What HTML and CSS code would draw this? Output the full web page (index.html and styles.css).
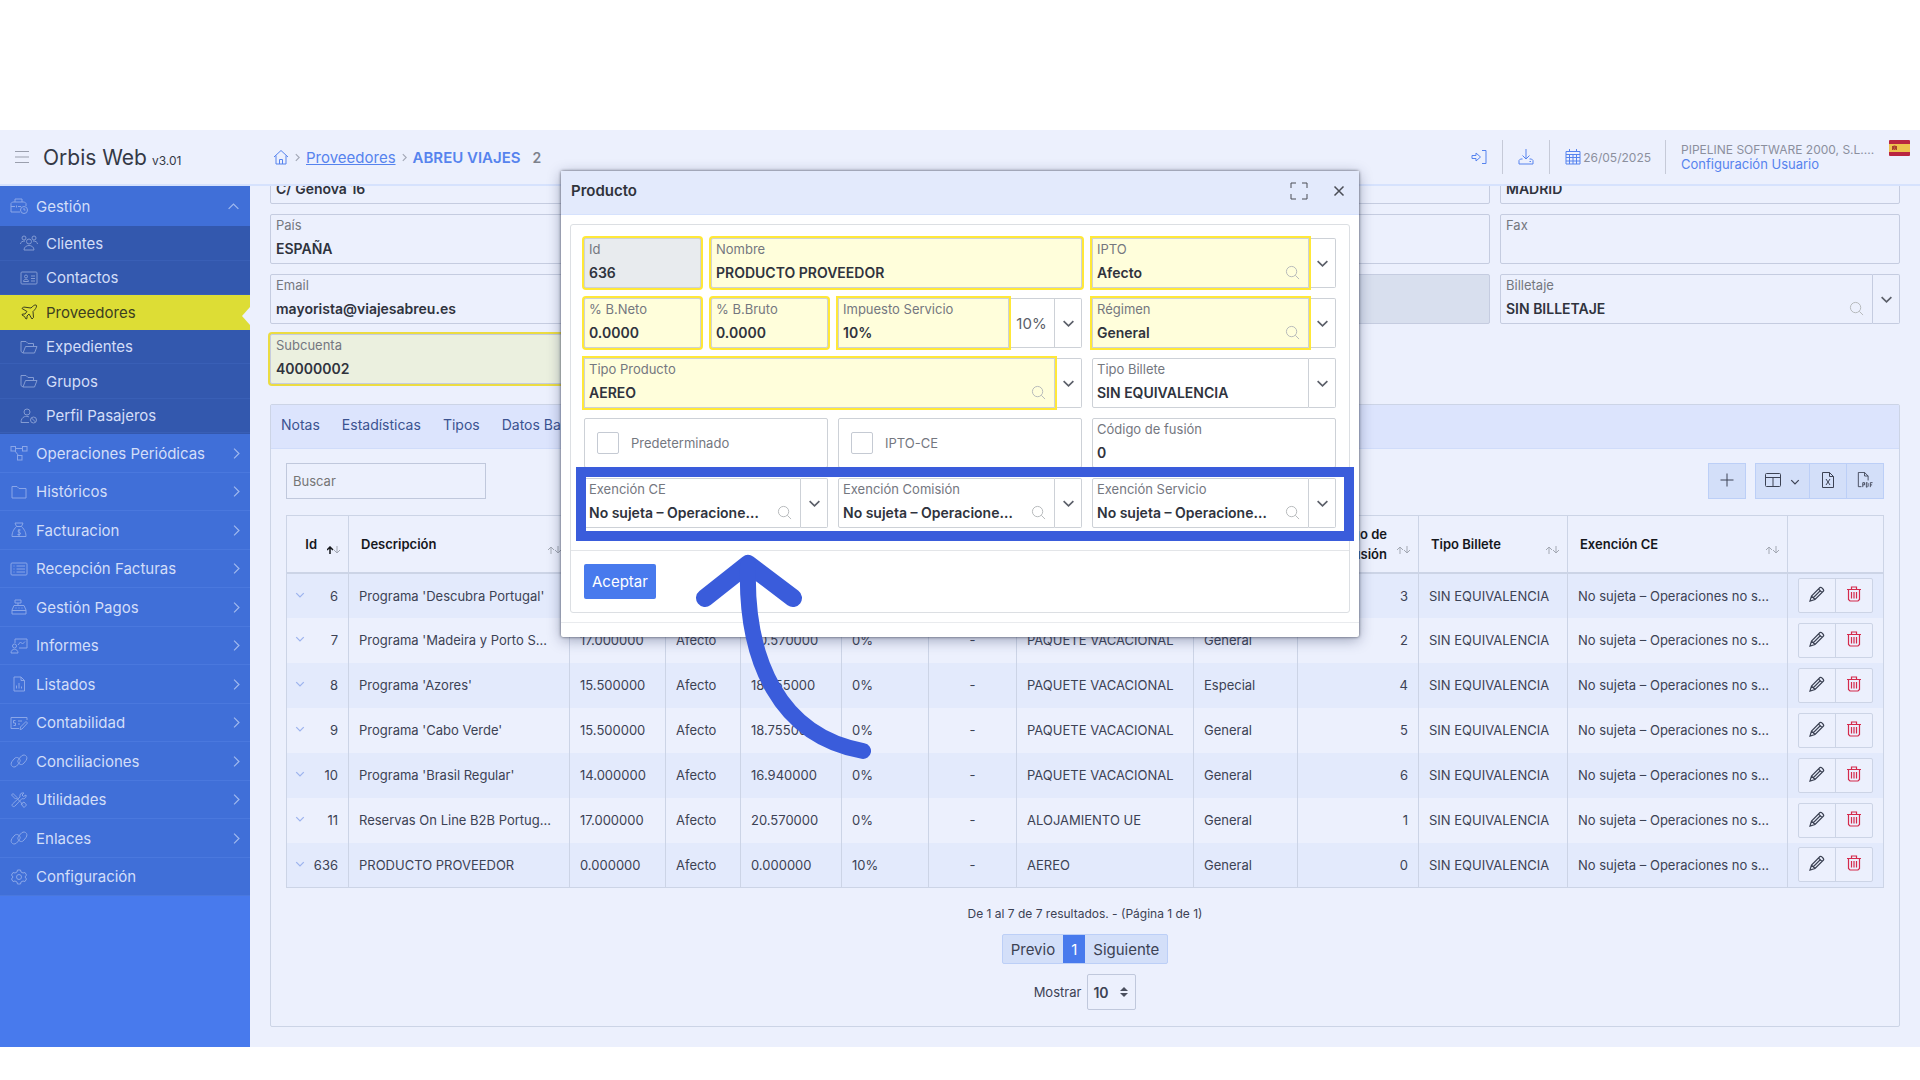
FILE: index.html
```html
<!DOCTYPE html>
<html lang="es">
<head>
    <meta charset="UTF-8">
    <meta name="viewport" content="width=device-width, initial-scale=1.0">
    <title>Orbis Web - Proveedores</title>
    <link rel="stylesheet" href="styles.css">
</head>
<body>
    <!-- Icon set -->
    <svg class="sprite" aria-hidden="true">
        <symbol id="i-menu" viewBox="0 0 16 16"><path d="M1 2.500h14M1 8h14M1 13.500h14"/></symbol>
        <symbol id="i-home" viewBox="0 0 16 16"><path d="M1 8l7-6.500L15 8M3 6.500V15h10V6.500M6.500 15v-4.500h3V15"/></symbol>
        <symbol id="i-right" viewBox="0 0 16 16"><path d="M5 2l6 6-6 6"/></symbol>
        <symbol id="i-down" viewBox="0 0 16 16"><path d="M2 5l6 6 6-6"/></symbol>
        <symbol id="i-up" viewBox="0 0 16 16"><path d="M2 11l6-6 6 6"/></symbol>
        <symbol id="i-login" viewBox="0 0 16 16"><path d="M11 1.500h4v13h-4M1 6.500h4V4l4.500 4L5 12V9.500H1z"/></symbol>
        <symbol id="i-download" viewBox="0 0 16 16"><path d="M8 0v9.500M4.500 6.500L8 10l3.500-3.500M4.500 10H2.500L1 11.500V15h14v-3.500L13.500 10h-2M11.500 12.500h1.500"/></symbol>
        <symbol id="i-calendar" viewBox="0 0 16 16"><path d="M1 2.500h14V15H1zM1 5.500h14M1 8.500h14M1 12h14M4.500 5.500V15M8 5.500V15M11.500 5.500V15M4.500 0v3M11.500 0v3"/></symbol>
        <symbol id="i-search" viewBox="0 0 16 16"><circle cx="7" cy="7" r="5.500"/><path d="M11 11l4 4"/></symbol>
        <symbol id="i-expand" viewBox="0 0 18 18"><path d="M1 6V1h5M12 1h5v5M17 12v5h-5M6 17H1v-5"/></symbol>
        <symbol id="i-close" viewBox="0 0 16 16"><path d="M2 2l12 12M14 2L2 14"/></symbol>
        <symbol id="i-plus" viewBox="0 0 16 16"><path d="M8 1.500v13M1.500 8h13"/></symbol>
        <symbol id="i-layout" viewBox="0 0 16 16"><rect x=".5" y="1.500" width="15" height="13" rx="1"/><path d="M.5 5.500h15M8 5.500v9"/></symbol>
        <symbol id="i-xls" viewBox="0 0 16 16"><path d="M2.500.5h7l4 4v11h-11zM9.500.5v4h4M6 7l4 6M10 7l-4 6"/></symbol>
        <symbol id="i-pdf" viewBox="0 0 18 18"><path d="M5 16.500H1.500V.5h7l4 4v5M8.500.5v4h4M6.500 17v-5h2v2.500h-2M10.500 12v5h1l1-1v-3l-1-1zM15 17v-5h2.500M15 14.500h2"/></symbol>
        <symbol id="i-pencil" viewBox="0 0 16 16"><path d="M1 15l1.500-5L11 1.500c1-1 4.500 2.500 3.500 3.500L6 13.500zM2.500 10L6 13.500M9.500 3L13 6.500M4.500 11.500l6.500-6.500"/></symbol>
        <symbol id="i-trash" viewBox="0 0 16 16"><path d="M1 3.500h14M5.500 3V1h5v2M2.500 3.500v10L4 15h8l1.500-1.500v-10M5.500 6v6.500M8 6v6.500M10.500 6v6.500"/></symbol>
        <symbol id="i-briefcase" viewBox="0 0 18 16"><path d="M10 14H1V5.500L2.500 4h12L16 5.500V8M5 4V1h7v3M1 8.500h4M8 8.500h3M6.500 7.500v2"/><circle cx="14" cy="12" r="3.500"/><path d="M14 10v2h1.500"/></symbol>
        <symbol id="i-users" viewBox="0 0 18 16"><circle cx="9" cy="6.500" r="2.500"/><circle cx="4" cy="3" r="2"/><circle cx="14" cy="3" r="2"/><path d="M4 15c0-6 10-6 10 0zM.5 9c0-2 2-3 4.500-3M17.500 9c0-2-2-3-4.500-3"/></symbol>
        <symbol id="i-card" viewBox="0 0 18 16"><rect x="1" y="2" width="16" height="12" rx="1"/><circle cx="6" cy="6.500" r="1.500"/><path d="M3.500 11.500c0-3 5-3 5 0zM11 6h4M11 8.500h4M11 11h4"/></symbol>
        <symbol id="i-plane" viewBox="0 0 16 16"><path d="M10 4c1.500-1.500 3.500-3.500 5-3s0 3.500-2 5.500l-1 1 .5 6-1.500 1.500-3-5-2 2v2.500L5 15l-1.500-2.500L1 11l.5-1H4l2-2.500-5-3L2.500 3z"/></symbol>
        <symbol id="i-folder-open" viewBox="0 0 18 16"><path d="M3 14L1 12.500v-10h5l2 2h5.500v3M3 14l2.500-6.500H17L14.500 14z"/></symbol>
        <symbol id="i-person" viewBox="0 0 18 16"><circle cx="7" cy="4" r="3"/><path d="M9 14.500H1C1 8 7 7.500 9 9"/><circle cx="13.500" cy="12" r="3"/><path d="M11.500 10l4 4"/></symbol>
        <symbol id="i-flow" viewBox="0 0 18 16"><rect x="1" y="1.500" width="4.500" height="4.500"/><rect x="12.500" y="1.500" width="4.500" height="4.500"/><rect x="7.500" y="10.500" width="4.500" height="4.500"/><path d="M5.500 3.500h7M5 6l3.500 4.500"/></symbol>
        <symbol id="i-folder" viewBox="0 0 18 16"><path d="M2 2.500h5l2 2h7v9.500H2z"/></symbol>
        <symbol id="i-bag" viewBox="0 0 18 16"><path d="M6.500 4.500L5 1h8l-1.500 3.500zM6.500 4.500C3 8 2 11 2 14.500h14c0-3.500-1-6.500-4.500-10M10.500 8H8.500l-.5 1.500 2.500 1.500-.5 1.500H7.500M9 7v7"/></symbol>
        <symbol id="i-list" viewBox="0 0 18 16"><rect x="1" y="2" width="16" height="12" rx="1"/><path d="M3.500 5h1M3.500 8h1M3.500 11h1M6.500 5H15M6.500 8H15M6.500 11H15"/></symbol>
        <symbol id="i-register" viewBox="0 0 18 16"><path d="M2 15v-4l2-4.500h10L16 11v4zM2 11.500h14M5 1h6v3H5zM8 4v2.500M5.500 9h1M8.500 9h1M11.500 9h1"/></symbol>
        <symbol id="i-teach" viewBox="0 0 18 16"><path d="M5 5V1h12v9H9"/><circle cx="4.500" cy="8" r="2"/><path d="M1 15c0-5 7-5 7 0zM8 7l2.500-3 2 2L15 3.500"/></symbol>
        <symbol id="i-report" viewBox="0 0 18 16"><path d="M4 1h7l3.500 3.500V15H4zM11 1v3.500h3.500M6.500 12.500v-3M9 12.500V7M11.500 12.500v-2"/></symbol>
        <symbol id="i-check" viewBox="0 0 18 16"><path d="M9 13.500H1v-11h16V5M5.500 5.500h-2V8h2v2.500h-2M8 6h4M8 9h2M10 14.500l.5-2.500L16 6.500 17.500 8 12 14z"/></symbol>
        <symbol id="i-link" viewBox="0 0 18 16"><path d="M9 5.500C7.500 4 5.500 4 4 6L2 8.500C.5 10.500 1 12.500 2.500 13.500s3.500.5 5-1.500L9.500 9.500c1-1.500 1-3-.5-4"/><path d="M9 10.500c1.500 1.500 3.500 1.500 5-.5l2-2.500c1.500-2 1-4-.5-5s-3.500-.5-5 1.500L8.500 6.500c-1 1.500-1 3 .5 4"/></symbol>
        <symbol id="i-tools" viewBox="0 0 18 16"><path d="M3 1.500l4 4-1.500 1.500-4-4zM6.500 6l6.500 6.500M11 12l3-2 2.500 3L14 15.500zM16 3c.5 3-2 4.500-4 3.500L5 14c-1.500 1.500-4 0-2.500-2L10 5C9.500 2 11 .5 14 1l-2 2 1.500 1.500z"/></symbol>
        <symbol id="i-gear" viewBox="0 0 18 16"><path d="M7.500 1h3l.5 2 2 1 2-.5 1.500 2.500L15 8l1.500 2-1.500 2.500-2-.5-2 1-.5 2h-3L7 13l-2-1-2 .5L1.500 10 3 8 1.500 6 3 3.500 5 4l2-1z"/><circle cx="9" cy="8" r="2.500"/></symbol>
    </svg>

    <div class="app">
        <header class="topbar">
            <div class="brand">
                <button class="icon-btn burger" type="button" aria-label="Menú"><svg class="icon"><use href="#i-menu"/></svg></button>
                <span class="brand-name">Orbis Web</span>
                <span class="brand-version">v3.01</span>
            </div>
            <nav class="breadcrumb">
                <a href="#" aria-label="Inicio"><svg class="icon"><use href="#i-home"/></svg></a>
                <svg class="icon sep"><use href="#i-right"/></svg>
                <a href="#" class="crumb">Proveedores</a>
                <svg class="icon sep"><use href="#i-right"/></svg>
                <strong>ABREU VIAJES</strong>
                <span class="count">2</span>
            </nav>
            <div class="top-actions">
                <button class="icon-btn" type="button" aria-label="Entrar"><svg class="icon"><use href="#i-login"/></svg></button>
                <button class="icon-btn" type="button" aria-label="Descargar"><svg class="icon"><use href="#i-download"/></svg></button>
                <span class="date"><svg class="icon"><use href="#i-calendar"/></svg>26/05/2025</span>
                <div class="user">
                    <span class="user-name">PIPELINE SOFTWARE 2000, S.L....</span>
                    <a href="#">Configuración Usuario</a>
                </div>
                <svg class="flag" viewBox="0 0 21 16">
                    <rect width="21" height="16" rx="1" fill="#b92540"/>
                    <rect y="4" width="21" height="8" fill="#edc14d"/>
                    <path d="M3.500 6v4M7.500 6v4M4.500 6h2v3l-1 1-1-1z" stroke="#a8402c" fill="#c2553b"/>
                </svg>
            </div>
        </header>

        <div class="body">
            <aside class="sidebar">
                <ul class="menu">
                    <li class="open">
                        <a href="#"><svg class="icon"><use href="#i-briefcase"/></svg>Gestión<svg class="arrow"><use href="#i-up"/></svg></a>
                        <ul class="submenu">
                            <li><a href="#"><svg class="icon"><use href="#i-users"/></svg>Clientes</a></li>
                            <li><a href="#"><svg class="icon"><use href="#i-card"/></svg>Contactos</a></li>
                            <li class="active"><a href="#"><svg class="icon"><use href="#i-plane"/></svg>Proveedores</a></li>
                            <li><a href="#"><svg class="icon"><use href="#i-folder-open"/></svg>Expedientes</a></li>
                            <li><a href="#"><svg class="icon"><use href="#i-folder-open"/></svg>Grupos</a></li>
                            <li><a href="#"><svg class="icon"><use href="#i-person"/></svg>Perfil Pasajeros</a></li>
                        </ul>
                    </li>
                    <li><a href="#"><svg class="icon"><use href="#i-flow"/></svg>Operaciones Periódicas<svg class="arrow"><use href="#i-right"/></svg></a></li>
                    <li><a href="#"><svg class="icon"><use href="#i-folder"/></svg>Históricos<svg class="arrow"><use href="#i-right"/></svg></a></li>
                    <li><a href="#"><svg class="icon"><use href="#i-bag"/></svg>Facturacion<svg class="arrow"><use href="#i-right"/></svg></a></li>
                    <li><a href="#"><svg class="icon"><use href="#i-list"/></svg>Recepción Facturas<svg class="arrow"><use href="#i-right"/></svg></a></li>
                    <li><a href="#"><svg class="icon"><use href="#i-register"/></svg>Gestión Pagos<svg class="arrow"><use href="#i-right"/></svg></a></li>
                    <li><a href="#"><svg class="icon"><use href="#i-teach"/></svg>Informes<svg class="arrow"><use href="#i-right"/></svg></a></li>
                    <li><a href="#"><svg class="icon"><use href="#i-report"/></svg>Listados<svg class="arrow"><use href="#i-right"/></svg></a></li>
                    <li><a href="#"><svg class="icon"><use href="#i-check"/></svg>Contabilidad<svg class="arrow"><use href="#i-right"/></svg></a></li>
                    <li><a href="#"><svg class="icon"><use href="#i-link"/></svg>Conciliaciones<svg class="arrow"><use href="#i-right"/></svg></a></li>
                    <li><a href="#"><svg class="icon"><use href="#i-tools"/></svg>Utilidades<svg class="arrow"><use href="#i-right"/></svg></a></li>
                    <li><a href="#"><svg class="icon"><use href="#i-link"/></svg>Enlaces<svg class="arrow"><use href="#i-right"/></svg></a></li>
                    <li><a href="#"><svg class="icon"><use href="#i-gear"/></svg>Configuración</a></li>
                </ul>
            </aside>

            <main class="content">
                <div class="supplier">
                    <div class="field nolabel"><input type="text" aria-label="Dirección" value="C/ Génova 16"></div>
                    <div class="field"></div>
                    <div class="field"></div>
                    <div class="field nolabel"><input type="text" aria-label="Población" value="MADRID"></div>
                    <div class="field"><label for="pais">País</label><input type="text" id="pais" value="ESPAÑA"></div>
                    <div class="field"></div>
                    <div class="field"></div>
                    <div class="field"><label for="fax">Fax</label><input type="text" id="fax"></div>
                    <div class="field"><label for="email">Email</label><input type="text" id="email" value="mayorista@viajesabreu.es"></div>
                    <div class="field"></div>
                    <div class="field disabled"></div>
                    <div class="combo">
                        <div class="field"><label for="billetaje">Billetaje</label><input type="text" id="billetaje" value="SIN BILLETAJE"><svg class="icon lens"><use href="#i-search"/></svg></div>
                        <button class="drop" type="button" aria-label="Desplegar"><svg class="icon"><use href="#i-down"/></svg></button>
                    </div>
                    <div class="field required"><label for="subcuenta">Subcuenta</label><input type="text" id="subcuenta" value="40000002"></div>
                </div>

                <section class="panel">
                    <nav class="tabs">
                        <a href="#">Notas</a>
                        <a href="#">Estadísticas</a>
                        <a href="#">Tipos</a>
                        <a href="#">Datos Bancarios</a>
                    </nav>
                    <div class="panel-body">
                        <div class="toolbar">
                            <input type="text" class="search" placeholder="Buscar" aria-label="Buscar">
                            <div class="btn-group">
                                <button type="button" aria-label="Nuevo"><svg class="icon"><use href="#i-plus"/></svg></button>
                            </div>
                            <div class="btn-group">
                                <button type="button" class="wide" aria-label="Columnas"><svg class="icon"><use href="#i-layout"/></svg><svg class="icon small"><use href="#i-down"/></svg></button>
                                <button type="button" aria-label="Excel"><svg class="icon"><use href="#i-xls"/></svg></button>
                                <button type="button" aria-label="PDF"><svg class="icon"><use href="#i-pdf"/></svg></button>
                            </div>
                        </div>
                        <table class="grid">
                            <colgroup>
                                <col style="width: 62px"><col><col style="width: 96px"><col style="width: 75px"><col style="width: 101px">
                                <col style="width: 87px"><col style="width: 88px"><col style="width: 177px"><col style="width: 104px">
                                <col style="width: 121px"><col style="width: 149px"><col style="width: 220px"><col style="width: 96px">
                            </colgroup>
                            <thead>
                                <tr id="heading"></tr>
                            </thead>
                            <tbody id="rows"></tbody>
                        </table>
                        <div class="pager">
                            <p>De 1 al 7 de 7 resultados. - (Página 1 de 1)</p>
                            <div class="pages">
                                <button type="button">Previo</button>
                                <button type="button" class="current">1</button>
                                <button type="button">Siguiente</button>
                            </div>
                            <div class="page-size">
                                <label for="mostrar">Mostrar</label>
                                <div class="size-box">
                                    <select id="mostrar"><option>10</option></select>
                                    <svg viewBox="0 0 8 10"><path d="M0 4l4-4 4 4zM0 6l4 4 4-4z"/></svg>
                                </div>
                            </div>
                        </div>
                    </div>
                </section>
            </main>
        </div>

        <div class="dialog" role="dialog" aria-labelledby="dialog-title">
            <div class="dialog-head">
                <h2 id="dialog-title">Producto</h2>
                <button class="icon-btn" type="button" aria-label="Maximizar"><svg class="icon expand"><use href="#i-expand"/></svg></button>
                <button class="icon-btn" type="button" aria-label="Cerrar"><svg class="icon close"><use href="#i-close"/></svg></button>
            </div>
            <form class="dialog-form">
                <div class="fields">
                    <div class="field required readonly"><label for="id">Id</label><input type="text" id="id" value="636" readonly></div>
                    <div class="field required span3"><label for="nombre">Nombre</label><input type="text" id="nombre" value="PRODUCTO PROVEEDOR"></div>
                    <div class="combo span2">
                        <div class="field required"><label for="ipto">IPTO</label><input type="text" id="ipto" value="Afecto"><svg class="icon lens"><use href="#i-search"/></svg></div>
                        <button class="drop" type="button" aria-label="Desplegar"><svg class="icon"><use href="#i-down"/></svg></button>
                    </div>

                    <div class="field required"><label for="neto">% B.Neto</label><input type="text" id="neto" value="0.0000"></div>
                    <div class="field required"><label for="bruto">% B.Bruto</label><input type="text" id="bruto" value="0.0000"></div>
                    <div class="combo span2">
                        <div class="field required"><label for="impuesto">Impuesto Servicio</label><input type="text" id="impuesto" value="10%"></div>
                        <span class="addon">10%</span>
                        <button class="drop" type="button" aria-label="Desplegar"><svg class="icon"><use href="#i-down"/></svg></button>
                    </div>
                    <div class="combo span2">
                        <div class="field required"><label for="regimen">Régimen</label><input type="text" id="regimen" value="General"><svg class="icon lens"><use href="#i-search"/></svg></div>
                        <button class="drop" type="button" aria-label="Desplegar"><svg class="icon"><use href="#i-down"/></svg></button>
                    </div>

                    <div class="combo span4">
                        <div class="field required"><label for="tipo">Tipo Producto</label><input type="text" id="tipo" value="AEREO"><svg class="icon lens"><use href="#i-search"/></svg></div>
                        <button class="drop" type="button" aria-label="Desplegar"><svg class="icon"><use href="#i-down"/></svg></button>
                    </div>
                    <div class="combo span2">
                        <div class="field"><label for="billete">Tipo Billete</label><select id="billete"><option>SIN EQUIVALENCIA</option></select></div>
                        <span class="drop"><svg class="icon"><use href="#i-down"/></svg></span>
                    </div>

                    <div class="field check span2"><input type="checkbox" id="predeterminado"><label for="predeterminado">Predeterminado</label></div>
                    <div class="field check span2"><input type="checkbox" id="iptoce"><label for="iptoce">IPTO-CE</label></div>
                    <div class="field span2"><label for="fusion">Código de fusión</label><input type="text" id="fusion" value="0"></div>

                    <div class="exentos">
                        <div class="combo">
                            <div class="field"><label for="exce">Exención CE</label><input type="text" id="exce" value="No sujeta – Operaciones no sujetas"><svg class="icon lens"><use href="#i-search"/></svg></div>
                            <button class="drop" type="button" aria-label="Desplegar"><svg class="icon"><use href="#i-down"/></svg></button>
                        </div>
                        <div class="combo">
                            <div class="field"><label for="excom">Exención Comisión</label><input type="text" id="excom" value="No sujeta – Operaciones no sujetas"><svg class="icon lens"><use href="#i-search"/></svg></div>
                            <button class="drop" type="button" aria-label="Desplegar"><svg class="icon"><use href="#i-down"/></svg></button>
                        </div>
                        <div class="combo">
                            <div class="field"><label for="exserv">Exención Servicio</label><input type="text" id="exserv" value="No sujeta – Operaciones no sujetas"><svg class="icon lens"><use href="#i-search"/></svg></div>
                            <button class="drop" type="button" aria-label="Desplegar"><svg class="icon"><use href="#i-down"/></svg></button>
                        </div>
                        <!-- callout frame and arrow -->
                        <div class="callout"></div>
                        <svg class="callout-arrow" viewBox="0 0 180 210">
                            <path d="M13 47L56 13l45 34" stroke-width="18"/>
                            <path d="M56 15C53 110 88 185 171 200" stroke-width="16"/>
                        </svg>
                    </div>
                </div>
                <div class="form-foot">
                    <button class="accept" type="button">Aceptar</button>
                </div>
            </form>
        </div>
    </div>

    <script src="script.js"></script>
</body>
</html>
```
FILE: styles.css
```css
* {
    box-sizing: border-box;
    margin: 0;
    padding: 0;
}
body {
    background: #fff;
    color: #3c4254;
    font-family: Inter, "Open Sans", sans-serif;
    font-size: 13px;
}
a {
    color: inherit;
    text-decoration: none;
}
ul {
    list-style: none;
}
button,
input,
select {
    font-family: inherit;
    color: inherit;
}
.sprite {
    display: none;
}
.icon {
    flex: none;
    width: 16px;
    height: 16px;
    fill: none;
    stroke: currentColor;
    stroke-width: 1;
}
.icon-btn {
    display: flex;
    border: none;
    background: none;
    color: inherit;
}

.app {
    position: relative;
    margin-top: 130px;
    background: #ecf0fd;
}

/* Top bar */
.topbar {
    display: flex;
    align-items: center;
    height: 56px;
    border-bottom: 2px solid #d6e2fd;
}
.brand {
    display: flex;
    align-items: baseline;
    width: 250px;
    padding-left: 14px;
    color: #343946;
}
.burger {
    align-self: center;
    margin-right: 13px;
    color: #9a9fad;
}
.brand-name {
    font-size: 21px;
}
.brand-version {
    margin-left: 5px;
    font-size: 12px;
}
.breadcrumb {
    display: flex;
    flex: 1;
    align-items: center;
    padding-left: 23px;
    color: #5683ee;
    font-size: 15px;
}
.breadcrumb .icon {
    display: block;
}
.breadcrumb .sep {
    width: 9px;
    height: 9px;
    margin: 0 4px;
    color: #a3a8b6;
    stroke-width: 2;
}
.crumb {
    text-decoration: underline;
}
.breadcrumb strong {
    font-size: 15px;
    font-weight: 600;
}
.count {
    margin-left: 12px;
    color: #7d818c;
    font-size: 14px;
    font-weight: 600;
}
.top-actions {
    display: flex;
    align-items: center;
    padding-right: 10px;
    color: #5683ee;
}
.top-actions > * {
    padding: 0 15px;
}
.top-actions .icon-btn,
.date {
    height: 34px;
    align-items: center;
    border-right: 1px solid #c6cad8;
}
.top-actions .date {
    display: flex;
    gap: 2px;
    padding-right: 14px;
    color: #8b8f9d;
    font-size: 12px;
}
.date .icon {
    color: #5683ee;
}
.top-actions .user {
    width: 223px;
    padding-right: 4px;
    line-height: 15px;
}
.user-name {
    display: block;
    white-space: nowrap;
    color: #8b8f9d;
    font-size: 12px;
}
.top-actions .flag {
    align-self: flex-start;
    width: 21px;
    height: 16px;
    padding: 0;
}

.body {
    display: flex;
}

/* Sidebar */
.sidebar {
    flex: none;
    width: 250px;
    background: #487aed;
    color: #d3def8;
    font-size: 15px;
}
.menu a {
    display: flex;
    align-items: center;
    height: 100%;
    padding-left: 10px;
}
.menu .icon {
    width: 18px;
    margin-right: 8px;
    opacity: .5;
}
.menu .arrow {
    width: 13px;
    height: 13px;
    margin: 0 7px 0 auto;
    fill: none;
    stroke: #9fb8ee;
    stroke-width: 1.500;
}
.menu > li {
    height: 38px;
    background: #406fd8;
    border-bottom: 1px solid #4a78de;
}
.menu > li:nth-child(even) {
    height: 39px;
}
.menu > li.open {
    height: auto;
    border: none;
}
.open > a {
    height: 40px;
}
.open > a .arrow {
    margin-right: 10px;
}
.submenu {
    padding-bottom: 1px;
    background: #3358ae;
}
.submenu li {
    height: 34px;
    border-bottom: 1px solid #395fb6;
}
.submenu li:nth-child(odd) {
    height: 35px;
}
.submenu a {
    padding-left: 20px;
}
.submenu .active {
    position: relative;
    background: #dddd35;
    border-color: #dddd35;
    color: #3c4020;
}
.active .icon {
    opacity: 1;
}
.active::after {
    content: "";
    position: absolute;
    right: 0;
    top: 12px;
    border: 9px solid transparent;
    border-width: 9px 8px 9px 0;
    border-right-color: #ecf0fd;
}

/* Fields */
.content {
    flex: 1;
    min-width: 0;
    overflow: hidden;
    padding: 0 20px 20px;
}
.supplier {
    display: grid;
    grid-template-columns: repeat(4, 1fr);
    gap: 10px;
    margin-top: -32px;
}
.field {
    position: relative;
    min-width: 0;
    height: 50px;
    padding: 2px 5px;
    border: 1px solid #c5cce0;
    border-radius: 2px;
}
.field label {
    display: block;
    color: #74777f;
    line-height: 16px;
}
.field input[type="text"],
.field select {
    display: block;
    width: 100%;
    height: 22px;
    margin-top: 4px;
    border: none;
    background: none;
    outline: none;
    appearance: none;
    color: #2f333d;
    font-size: 14px;
    font-weight: 600;
    text-overflow: ellipsis;
}
.nolabel {
    padding-top: 18px;
}
.field.disabled {
    background: #d8dfee;
}
.required {
    background: #fffedb;
    box-shadow: 0 0 0 2px #ffe838;
}
.supplier .required {
    background: #ebf0df;
    box-shadow: 0 0 0 2px #ebdc42;
}
.required.readonly {
    background: #e8ebee;
}
.combo {
    display: flex;
    min-width: 0;
}
.combo .field {
    flex: 1;
    border-radius: 2px 0 0 2px;
}
.combo .required {
    z-index: 1;
    border-radius: 0;
}
.lens {
    position: absolute;
    right: 8px;
    bottom: 7px;
    width: 15px;
    height: 15px;
    color: #b3b6b9;
}
.combo .field:has(.lens) input {
    width: calc(100% - 31px);
}
.drop,
.addon {
    display: flex;
    flex: none;
    align-items: center;
    justify-content: center;
    height: 50px;
    border: 1px solid #c5cce0;
    border-left: none;
    background: none;
}
.drop {
    width: 27px;
    border-radius: 0 2px 2px 0;
    color: #5b5f69;
}
.drop .icon {
    width: 13px;
    height: 13px;
    stroke-width: 2;
}
.addon {
    width: 46px;
    color: #5b5f69;
    font-size: 15px;
}

/* Tab panel */
.panel {
    margin-top: 20px;
    border: 1px solid #ccd4e6;
    border-radius: 2px;
}
.tabs {
    display: flex;
    gap: 22px;
    height: 44px;
    padding-left: 10px;
    background: #dce4fd;
    border-bottom: 1px solid #d0dcfa;
    color: #3b5390;
    font-size: 14px;
    line-height: 39px;
}
.panel-body {
    padding: 14px 15px 16px;
}
.toolbar {
    display: flex;
    gap: 9px;
    margin-bottom: 16px;
}
.search {
    width: 200px;
    height: 36px;
    margin-right: auto;
    padding: 0 6px;
    border: 1px solid #c0c8dc;
    background: none;
    font-size: 13px;
}
.btn-group {
    display: flex;
}
.btn-group button {
    display: flex;
    align-items: center;
    justify-content: center;
    gap: 9px;
    width: 38px;
    height: 36px;
    padding-bottom: 3px;
    border: 1px solid #bccff7;
    background: #d3dff9;
}
.btn-group button + button {
    margin-left: -1px;
}
.btn-group .wide {
    width: 55px;
}
.btn-group .small {
    width: 10px;
    height: 10px;
    margin-top: 5px;
    stroke-width: 2;
}

/* Table */
.grid {
    width: 100%;
    table-layout: fixed;
    border-collapse: collapse;
    border: 1px solid #ccd4e6;
}
.grid th,
.grid td {
    border-left: 1px solid #ccd4e6;
    overflow: hidden;
    white-space: nowrap;
    text-overflow: ellipsis;
}
.grid th {
    height: 57px;
    padding: 0 8px 0 12px;
    border-bottom: 2px solid #ccd4e6;
    color: #15171c;
    font-weight: 600;
    line-height: 20px;
    text-align: left;
}
.th-inner {
    display: flex;
    align-items: center;
    justify-content: space-between;
}
.grid td {
    height: 45px;
    padding: 0 10px;
}
.grid td:first-child {
    padding-left: 8px;
}
.grid tbody tr:nth-child(odd) {
    background: #e3eafc;
}
.grid .right {
    text-align: right;
}
.grid .center {
    text-align: center;
}
.right .th-inner {
    justify-content: flex-end;
    gap: 10px;
}
.sort {
    flex: none;
    width: 13px;
    height: 8px;
    margin-top: 13px;
    fill: none;
    stroke: #a3a8b3;
}
.sort .on {
    stroke: #15171c;
    stroke-width: 1.500;
}
.id-cell {
    display: flex;
    align-items: center;
    justify-content: space-between;
}
.id-cell .icon {
    width: 10px;
    height: 10px;
    margin-top: -2px;
    color: #9db3ee;
    stroke-width: 2;
}
.row-actions {
    display: flex;
    width: 75px;
    height: 35px;
    border: 1px solid #ccd4e6;
    border-radius: 2px;
    background: #ecf0fd;
}
.row-actions button {
    display: flex;
    flex: 1;
    align-items: center;
    justify-content: center;
    padding-bottom: 3px;
    border: none;
    background: none;
}
.row-actions .icon {
    stroke-width: 1.200;
}
.row-actions .delete {
    border-left: 1px solid #ccd4e6;
    color: #d42a4c;
}
.pager {
    display: flex;
    flex-direction: column;
    align-items: center;
    gap: 10px;
    padding-top: 16px;
}
.pager p {
    font-size: 12px;
    line-height: 20px;
}
.pages {
    display: flex;
    border: 1px solid #bccff7;
    border-radius: 2px;
    background: #d3dff9;
}
.pages button {
    height: 28px;
    padding: 0 8px;
    border: none;
    background: none;
    font-size: 15px;
}
.pages .current {
    background: #487aed;
    color: #fff;
}
.page-size {
    display: flex;
    align-items: center;
    gap: 6px;
}
.size-box {
    display: flex;
    align-items: center;
    width: 49px;
    height: 36px;
    padding: 0 7px 0 5px;
    border: 1px solid #c0c8dc;
    border-radius: 2px;
}
.size-box select {
    flex: 1;
    min-width: 0;
    height: 100%;
    border: none;
    background: none;
    appearance: none;
    font-size: 14px;
    font-weight: 600;
}
.size-box svg {
    width: 8px;
    height: 10px;
    fill: #4a4f5e;
}

/* Dialog */
.dialog {
    position: absolute;
    z-index: 5;
    top: 41px;
    left: 50%;
    width: 798px;
    margin-left: -399px;
    padding-bottom: 15px;
    background: #fff;
    border-radius: 2px;
    box-shadow: 0 0 3px rgba(40, 45, 60, .8), 0 3px 14px rgba(40, 50, 90, .4);
}
.dialog-head {
    display: flex;
    align-items: center;
    height: 44px;
    padding: 0 14px 4px 10px;
    background: #e3eafc;
    border-bottom: 1px solid #d6e2fd;
    color: #4a4d55;
}
.dialog-head h2 {
    flex: 1;
    color: #30333b;
    font-size: 15px;
    font-weight: 600;
}
.dialog-head .expand {
    width: 18px;
    height: 18px;
    margin-right: 25px;
}
.dialog-head .close {
    width: 12px;
    height: 12px;
    stroke-width: 2;
}
.dialog-form {
    position: relative;
    margin: 9px;
    border: 1px solid #dcdfe3;
    border-radius: 3px;
}
.dialog-form::after {
    content: "";
    position: absolute;
    left: -10px;
    right: -10px;
    bottom: -11px;
    border-bottom: 1px solid #e9ebee;
}
.fields {
    display: grid;
    grid-template-columns: repeat(6, 1fr);
    gap: 10px;
    padding: 13px 13px 22px;
    border-bottom: 1px solid #e3e5e8;
}
.span2 {
    grid-column: span 2;
}
.span3 {
    grid-column: span 3;
}
.span4 {
    grid-column: span 4;
}
.dialog .field,
.dialog .drop,
.dialog .addon {
    border-color: #cdd1d7;
}
.dialog .field {
    padding-left: 4px;
}
.dialog .check {
    display: flex;
    align-items: center;
    gap: 12px;
    padding-left: 12px;
}
.check input {
    width: 22px;
    height: 22px;
    border: 1px solid #c5cad3;
    border-radius: 2px;
    appearance: none;
}
.exentos {
    position: relative;
    display: grid;
    grid-column: span 6;
    grid-template-columns: repeat(3, 1fr);
    gap: 10px;
}
.callout {
    position: absolute;
    z-index: 2;
    inset: -11px -18px -13px -8px;
    border: 10px solid #3a5cdb;
    pointer-events: none;
}
.callout-arrow {
    position: absolute;
    z-index: 3;
    top: 73px;
    left: 108px;
    width: 180px;
    height: 210px;
    fill: none;
    stroke: #3a5cdb;
    stroke-linecap: round;
    stroke-linejoin: round;
    pointer-events: none;
}
.form-foot {
    padding: 13px;
}
.accept {
    display: block;
    height: 35px;
    padding: 0 8px;
    border: none;
    border-radius: 2px;
    background: #487aed;
    color: #fff;
    font-size: 15px;
}
```
FILE: script.js
```js
const headings = [
    "Id", "Descripción", "% B.Neto", "IPTO", "% B.Bruto", "Impuesto", "Predet.",
    "Tipo Producto", "Régimen", "Código de<br>fusión", "Tipo Billete", "Exención CE", ""
]
const rightCols = [0, 9]
const exencion = "No sujeta – Operaciones no s..."
const products = [
    [6, "Programa 'Descubra Portugal'", "17.000000", "Afecto", "20.570000", "0%", "PAQUETE VACACIONAL", "General", 3],
    [7, "Programa 'Madeira y Porto S...", "17.000000", "Afecto", "20.570000", "0%", "PAQUETE VACACIONAL", "General", 2],
    [8, "Programa 'Azores'", "15.500000", "Afecto", "18.755000", "0%", "PAQUETE VACACIONAL", "Especial", 4],
    [9, "Programa 'Cabo Verde'", "15.500000", "Afecto", "18.755000", "0%", "PAQUETE VACACIONAL", "General", 5],
    [10, "Programa 'Brasil Regular'", "14.000000", "Afecto", "16.940000", "0%", "PAQUETE VACACIONAL", "General", 6],
    [11, "Reservas On Line B2B Portug...", "17.000000", "Afecto", "20.570000", "0%", "ALOJAMIENTO UE", "General", 1],
    [636, "PRODUCTO PROVEEDOR", "0.000000", "Afecto", "0.000000", "10%", "AEREO", "General", 0]
]

function icon(name) {
    return `<svg class="icon"><use href="#i-${name}"/></svg>`
}

// Table head, the Id column is the sorted one
const heading = document.getElementById("heading")
headings.forEach((text, i) => {
    const th = document.createElement("th")
    if (rightCols.includes(i)) {
        th.className = "right"
    }
    if (text) {
        const on = i === 0 ? "on" : ""
        th.innerHTML = `<div class="th-inner"><span>${text}</span>
            <svg class="sort" viewBox="0 0 13 8"><path class="${on}" d="M3 8V1M0 4l3-3 3 3"/><path d="M10 0v7M7 4l3 3 3-3"/></svg></div>`
    }
    heading.appendChild(th)
})

const rows = document.getElementById("rows")
for (const p of products) {
    const tr = document.createElement("tr")
    tr.innerHTML = `
        <td><div class="id-cell">${icon("down")}<span>${p[0]}</span></div></td>
        <td>${p[1]}</td>
        <td>${p[2]}</td>
        <td>${p[3]}</td>
        <td>${p[4]}</td>
        <td>${p[5]}</td>
        <td class="center">-</td>
        <td>${p[6]}</td>
        <td>${p[7]}</td>
        <td class="right">${p[8]}</td>
        <td>SIN EQUIVALENCIA</td>
        <td>${exencion}</td>
        <td><div class="row-actions">
            <button type="button" aria-label="Editar">${icon("pencil")}</button>
            <button type="button" class="delete" aria-label="Borrar">${icon("trash")}</button>
        </div></td>`
    rows.appendChild(tr)
}
```
